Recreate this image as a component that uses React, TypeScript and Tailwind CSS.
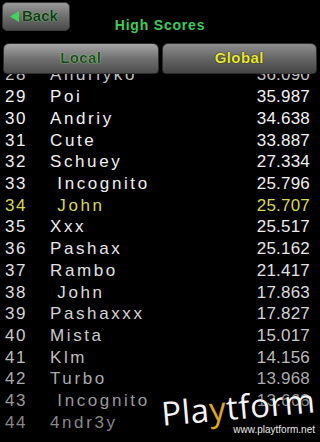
const rows: { rank: number; name: string; score: string; color: string }[] = [
  { rank: 28, name: "Andriyko", score: "36.090", color: "text-[#c4c4c4]" },
  { rank: 29, name: "Poi", score: "35.987", color: "text-[#f2f2f2]" },
  { rank: 30, name: "Andriy", score: "34.638", color: "text-[#f2f2f2]" },
  { rank: 31, name: "Cute", score: "33.887", color: "text-[#f0f0f0]" },
  { rank: 32, name: "Schuey", score: "27.334", color: "text-[#f0f0f0]" },
  { rank: 33, name: " Incognito", score: "25.796", color: "text-[#eeeeee]" },
  { rank: 34, name: " John", score: "25.707", color: "text-[#d8d858]" },
  { rank: 35, name: "Xxx", score: "25.517", color: "text-[#ececec]" },
  { rank: 36, name: "Pashax", score: "25.162", color: "text-[#e6e6e6]" },
  { rank: 37, name: "Rambo", score: "21.417", color: "text-[#e0e0e0]" },
  { rank: 38, name: " John", score: "17.863", color: "text-[#dcdcdc]" },
  { rank: 39, name: "Pashaxxx", score: "17.827", color: "text-[#d4d4d4]" },
  { rank: 40, name: "Mista", score: "15.017", color: "text-[#cacaca]" },
  { rank: 41, name: "Klm", score: "14.156", color: "text-[#bdbdbd]" },
  { rank: 42, name: "Turbo", score: "13.968", color: "text-[#ababab]" },
  { rank: 43, name: " Incognito", score: "13.668", color: "text-[#9a9a9a]" },
  { rank: 44, name: "4ndr3y", score: "12.904", color: "text-[#888888]" },
];

const font = { fontFamily: '"Liberation Sans", Arial, sans-serif' };

export default function App() {
  return (
    <div className="relative w-[320px] h-[442px] bg-black overflow-hidden flex flex-col" style={font}>
      {/* Kopf */}
      <div className="grid grid-cols-[1fr_auto_1fr] h-[43px] shrink-0">
        <div className="pl-[2px] pt-[2px]">
          <div className="w-[68px] h-[29px] rounded-[5px] border border-[#3a3a3a] bg-gradient-to-b from-[#9a9a9a] via-[#6e6e6e] to-[#4a4a4a] flex items-center pl-[7px] gap-[3px]">
            <svg width="9" height="11" viewBox="0 0 9 11">
              <polygon points="9,0 9,11 0,5.5" fill="#3fd45a" />
            </svg>
            <span className="text-[15px] font-bold text-[#1a381a] [text-shadow:0_0_1px_#7fd88a,0_0_1px_#7fd88a]">
              Back
            </span>
          </div>
        </div>
        <div className="self-end pb-[11px] text-[14px] leading-none font-bold tracking-[0.8px] text-[#3ecc5c]">
          High Scores
        </div>
        <div />
      </div>

      {/* Tabs */}
      <div className="flex gap-[3px] px-[3px] h-[31px] shrink-0">
        <div className="flex-1 rounded-t-[6px] rounded-b-[4px] border border-[#2e2e2e] bg-gradient-to-b from-[#a6a6a6] via-[#717171] to-[#4c4c4c] flex items-center justify-center">
          <span className="text-[15px] font-bold tracking-[0.4px] text-[#1e4a1e] [text-shadow:0_0_1px_#a8e8a8,0_0_1px_#a8e8a8]">
            Local
          </span>
        </div>
        <div className="flex-1 rounded-t-[6px] rounded-b-[4px] border border-[#2e2e2e] bg-gradient-to-b from-[#8e8e8e] via-[#666666] to-[#454545] flex items-center justify-center">
          <span className="text-[15px] font-bold tracking-[0.4px] text-[#e8e83c] [text-shadow:0_0_1px_#202000,0_0_1px_#202000]">
            Global
          </span>
        </div>
      </div>

      {/* Liste */}
      <div className="flex-1 overflow-hidden">
        <div className="-mt-[10px]">
          {rows.map((r) => (
            <div key={r.rank} className={`flex items-center h-[21.73px] text-[17px] leading-none ${r.color}`}>
              <span className="w-[50px] pl-[5px] tracking-[1.5px]">{r.rank}</span>
              <span className="flex-1 whitespace-pre tracking-[2.6px]">{r.name}</span>
              <span className="pr-[10px] tracking-[0.2px]">{r.score}</span>
            </div>
          ))}
        </div>
      </div>

      {/* Wasserzeichen */}
      <div className="absolute right-0 bottom-0 w-[150px] h-[28px] bg-black" />
      <div className="absolute right-[5px] bottom-[7px] flex flex-col items-end">
        <div className="-rotate-[5deg] text-[33px] leading-none text-[#f4f4f4] tracking-[0.5px] [text-shadow:1px_1px_2px_#000] mb-[2px]" style={{ fontFamily: '"Open Sans", "Liberation Sans", sans-serif' }}>
          Pla<span className="text-[#e0a818]">y</span>tform
        </div>
        <div className="text-[10px] leading-none text-[#e8e8e8]">www.playtform.net</div>
      </div>
    </div>
  );
}
